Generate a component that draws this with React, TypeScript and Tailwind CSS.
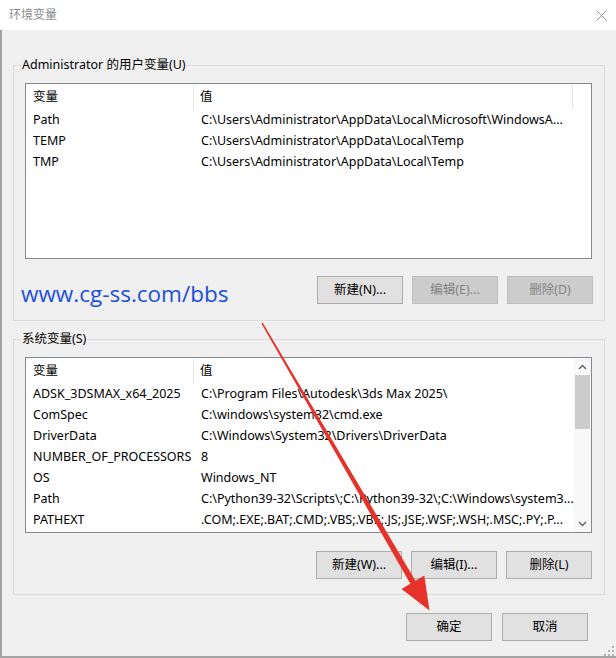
const userVars = [
  { name: "Path", value: "C:\\Users\\Administrator\\AppData\\Local\\Microsoft\\WindowsA..." },
  { name: "TEMP", value: "C:\\Users\\Administrator\\AppData\\Local\\Temp" },
  { name: "TMP", value: "C:\\Users\\Administrator\\AppData\\Local\\Temp" },
];

const sysVars = [
  { name: "ADSK_3DSMAX_x64_2025", value: "C:\\Program Files\\Autodesk\\3ds Max 2025\\" },
  { name: "ComSpec", value: "C:\\windows\\system32\\cmd.exe" },
  { name: "DriverData", value: "C:\\Windows\\System32\\Drivers\\DriverData" },
  { name: "NUMBER_OF_PROCESSORS", value: "8" },
  { name: "OS", value: "Windows_NT" },
  { name: "Path", value: "C:\\Python39-32\\Scripts\\;C:\\Python39-32\\;C:\\Windows\\system3..." },
  { name: "PATHEXT", value: ".COM;.EXE;.BAT;.CMD;.VBS;.VBE;.JS;.JSE;.WSF;.WSH;.MSC;.PY;.P..." },
];

type Row = { name: string; value: string };

const Button = ({ label, disabled }: { label: string; disabled?: boolean }) => (
  <div
    className={
      disabled
        ? "w-[86px] h-[28px] flex items-center justify-center border border-[#bfbfbf] bg-[#cccccc] text-[#838383]"
        : "w-[86px] h-[28px] flex items-center justify-center border border-[#adadad] bg-[#e1e1e1] text-black"
    }
  >
    {label}
  </div>
);

const VarList = ({ rows, scroll }: { rows: Row[]; scroll?: boolean }) => (
  <div className="mt-[10px] w-[567px] h-[176px] border border-[#828790] bg-white flex">
    <div className="flex-1 flex flex-col min-w-0">
      <div className="h-[26px] pt-[1px] flex items-center">
        <div className="w-[168px] h-full pl-[7px] flex items-center border-r border-[#e5e5e5]">变量</div>
        <div className="flex-1 h-full pl-[6px] flex items-center">值</div>
        {!scroll && <div className="w-[19px] h-full border-l border-[#e5e5e5]" />}
      </div>
      {rows.map((r) => (
        <div key={r.name} className="h-[21px] flex items-center whitespace-nowrap">
          <div className="w-[168px] pl-[7px]">{r.name}</div>
          <div className="flex-1 pl-[7px]">{r.value}</div>
        </div>
      ))}
    </div>
    {scroll && (
      <div className="w-[17px] h-full bg-[#f8f8f8] flex flex-col items-center">
        <div className="h-[17px] w-full flex items-center justify-center">
          <svg width="9" height="6" viewBox="0 0 9 6">
            <path d="M1 5 L4.5 1.5 L8 5" fill="none" stroke="#606060" strokeWidth="1.3" />
          </svg>
        </div>
        <div className="w-[15px] h-[54px] bg-[#cdcdcd]" />
        <div className="flex-1" />
        <div className="h-[17px] w-full flex items-center justify-center">
          <svg width="9" height="6" viewBox="0 0 9 6">
            <path d="M1 1 L4.5 4.5 L8 1" fill="none" stroke="#606060" strokeWidth="1.3" />
          </svg>
        </div>
      </div>
    )}
  </div>
);

const GroupBox = ({ label, children }: { label: string; children: React.ReactNode }) => (
  <div className="h-[256px] border border-[#dcdcdc] pl-[11px] flex flex-col">
    <span className="-mt-[10px] -ml-[4px] w-fit px-[1px] bg-[#f0f0f0] leading-[17px]">{label}</span>
    {children}
  </div>
);

export default function App() {
  return (
    <div className="relative w-[616px] h-[658px] overflow-hidden bg-[#f0f0f0] text-[12.5px] text-black font-['Noto_Sans','Noto_Sans_CJK_SC',sans-serif]">
      <div className="h-[30px] bg-white flex items-center justify-between pl-[9px] pr-[9px]">
        <span className="text-[#8c8c8c] text-[12px]">环境变量</span>
        <svg width="11" height="11" viewBox="0 0 11 11">
          <path d="M0.5 0.5 L10.5 10.5 M10.5 0.5 L0.5 10.5" stroke="#9a9a9a" strokeWidth="1" />
        </svg>
      </div>

      <div className="h-[628px] border-l-2 border-b-2 border-[#a3a3a3] pl-[11px] pr-[11px] pt-[35px] flex flex-col">
        <GroupBox label="Administrator 的用户变量(U)">
          <VarList rows={userVars} />
          <div className="w-[567px] mt-[16px] flex items-center justify-between">
            <span className="-ml-[4px] mt-[8px] text-[22.5px] leading-none text-[#1d4fd8] font-['Open_Sans',sans-serif]">
              www.cg-ss.com/bbs
            </span>
            <div className="flex gap-[9px] -mr-[1px]">
              <Button label="新建(N)..." />
              <Button label="编辑(E)..." disabled />
              <Button label="删除(D)" disabled />
            </div>
          </div>
        </GroupBox>

        <div className="mt-[18px]">
          <GroupBox label="系统变量(S)">
            <VarList rows={sysVars} scroll />
            <div className="w-[567px] mt-[18px] flex justify-end gap-[9px] -mr-[1px]">
              <Button label="新建(W)..." />
              <Button label="编辑(I)..." />
              <Button label="删除(L)" />
            </div>
          </GroupBox>
        </div>

        <div className="mt-[18px] mr-[17px] flex justify-end gap-[10px]">
          <Button label="确定" />
          <Button label="取消" />
        </div>
      </div>

      <svg className="absolute right-[2px] bottom-[2px]" width="10" height="10" viewBox="0 0 10 10">
        <g fill="#b5b5b5">
          <rect x="8" y="0" width="2" height="2" />
          <rect x="4" y="4" width="2" height="2" />
          <rect x="8" y="4" width="2" height="2" />
          <rect x="0" y="8" width="2" height="2" />
          <rect x="4" y="8" width="2" height="2" />
          <rect x="8" y="8" width="2" height="2" />
        </g>
      </svg>

      <svg className="absolute inset-0 pointer-events-none" width="616" height="658" viewBox="0 0 616 658">
        <polygon
          points="261.4,323.4 410.3,583.7 401.5,589 429.5,610.5 424.3,575.5 415.5,580.7 262.6,322.6"
          fill="#e5332c"
        />
      </svg>
    </div>
  );
}
